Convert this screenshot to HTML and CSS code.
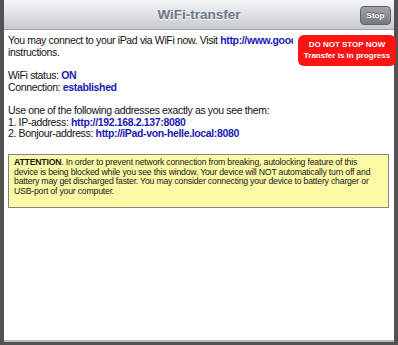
FILE: index.html
```html
<!DOCTYPE html>
<html lang="en">
<head>
  <meta charset="UTF-8" />
  <title>WiFi-transfer</title>
  <link rel="stylesheet" href="styles.css">
</head>
<body>

  <div class="modal">
    <div class="modal-header">
      <h1 class="title">WiFi-transfer</h1>
      <button class="btn-stop">Stop</button>
    </div>

    <div class="modal-body">
      <p>
        <span class="intro-line">You may connect to your iPad via WiFi now. Visit <a href="#">http://www.goodiware.com/wifi</a> for</span>
        instructions.
      </p>

      <p>WiFi status: <b class="val">ON</b><br>
      Connection: <b class="val">established</b></p>

      <p>Use one of the following addresses exactly as you see them:<br>
      1. IP-address: <a href="#">http://192.168.2.137:8080</a><br>
      2. Bonjour-address: <a href="#">http://iPad-von-helle.local:8080</a></p>

      <div class="notice">
        <b>ATTENTION</b>. In order to prevent network connection from breaking, autolocking feature of this device is being blocked while you see this window. Your device will NOT automatically turn off and battery may get discharged faster. You may consider connecting your device to battery charger or USB-port of your computer.
      </div>

      <div class="badge">
        <div>DO NOT STOP NOW</div>
        <div>Transfer is in progress</div>
      </div>
    </div>
  </div>

</body>
</html>
```

FILE: styles.css
```css
* {
  box-sizing: border-box;
}

body {
  margin: 0;
  background: #525252;
  font-family: 'Liberation Sans', Arial, sans-serif;
  height: 345px;
  overflow: hidden;
}

.modal {
  margin: 0 4px;
  height: 342px;
  background: #fff;
  border-bottom: 2px solid #b9b9b9;
}

.modal-header {
  position: relative;
  height: 30px;
  background: linear-gradient(#f5f6f8, #d9dce1 60%, #c6cad1);
  border-bottom: 1px solid #9ea2a9;
  display: flex;
  align-items: center;
  justify-content: center;
}

.title {
  margin: 0;
  font-size: 13.5px;
  font-weight: bold;
  color: #6e7784;
  text-shadow: 0 1px 0 #fff;
}

.btn-stop {
  position: absolute;
  right: 3px;
  top: 6px;
  height: 19px;
  width: 31px;
  padding: 0;
  border: 1px solid #5f636a;
  border-radius: 4px;
  background: linear-gradient(#a0a4aa, #767b82);
  color: #fff;
  font-family: inherit;
  font-size: 8px;
  font-weight: bold;
  text-shadow: 0 -1px 0 #555;
}

.modal-body {
  position: relative;
  padding: 5px 4px 0 4px;
  font-size: 10.5px;
  line-height: 11.5px;
  letter-spacing: -0.35px;
  color: #111;
}

.modal-body p {
  margin: 0 0 12px 0;
}

.intro-line {
  display: block;
  width: 285px;
  white-space: nowrap;
  overflow: hidden;
}

.modal-body a,
.val {
  color: #1a1ab4;
  font-weight: bold;
  text-decoration: none;
}

.notice {
  margin-top: 14.5px;
  margin-right: 1px;
  padding: 3px 12px 10px 5px;
  background: #fbf8a6;
  border: 1px solid #858585;
  font-size: 8.7px;
  line-height: 9.7px;
  letter-spacing: -0.2px;
  color: #1a1a1a;
}

.badge {
  position: absolute;
  top: 5px;
  right: -2px;
  width: 98px;
  height: 31px;
  padding-top: 4px;
  border-radius: 6px;
  background: #fb1414;
  color: #fff;
  font-size: 8px;
  line-height: 11px;
  letter-spacing: 0;
  font-weight: bold;
  text-align: center;
}
```
